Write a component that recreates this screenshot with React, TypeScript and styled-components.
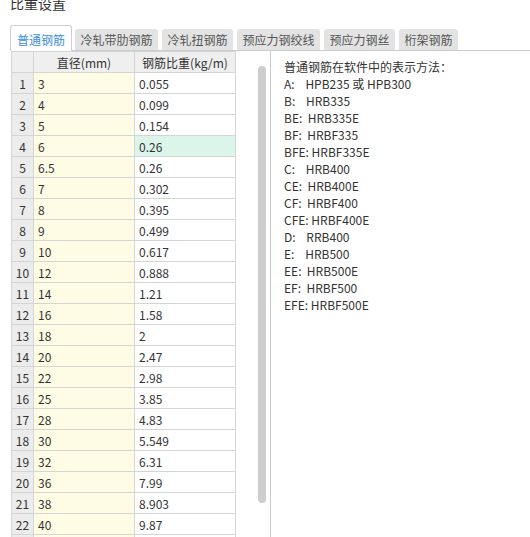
import { useState } from "react";
import styled, { createGlobalStyle } from "styled-components";

const GlobalStyle = createGlobalStyle`
  html, body {
    margin: 0;
    padding: 0;
    height: 537px;
    overflow: hidden;
    background: #fff;
    color: #333;
    font-family: "Microsoft YaHei", "Noto Sans CJK SC", sans-serif;
  }
`;

const TABS = ["普通钢筋", "冷轧带肋钢筋", "冷轧扭钢筋", "预应力钢绞线", "预应力钢丝", "桁架钢筋"];

const ROWS: [string, string][] = [
  ["3", "0.055"],
  ["4", "0.099"],
  ["5", "0.154"],
  ["6", "0.26"],
  ["6.5", "0.26"],
  ["7", "0.302"],
  ["8", "0.395"],
  ["9", "0.499"],
  ["10", "0.617"],
  ["12", "0.888"],
  ["14", "1.21"],
  ["16", "1.58"],
  ["18", "2"],
  ["20", "2.47"],
  ["22", "2.98"],
  ["25", "3.85"],
  ["28", "4.83"],
  ["30", "5.549"],
  ["32", "6.31"],
  ["36", "7.99"],
  ["38", "8.903"],
  ["40", "9.87"],
  ["50", "15.42"],
];

const NOTES = [
  "普通钢筋在软件中的表示方法：",
  "A:    HPB235 或 HPB300",
  "B:    HRB335",
  "BE:  HRB335E",
  "BF:  HRBF335",
  "BFE: HRBF335E",
  "C:    HRB400",
  "CE:  HRB400E",
  "CF:  HRBF400",
  "CFE: HRBF400E",
  "D:    RRB400",
  "E:    HRB500",
  "EE:  HRB500E",
  "EF:  HRBF500",
  "EFE: HRBF500E",
];

export default function App() {
  const [active, setActive] = useState(0);
  const selectedRow = 3;

  return (
    <>
      <GlobalStyle />
      <Title>比重设置</Title>
      <TabBar>
        {TABS.map((t, i) => (
          <Tab key={t} $active={i === active} onClick={() => setActive(i)}>
            {t}
          </Tab>
        ))}
      </TabBar>
      <Panel>
        <LeftPane>
          <Grid>
            <thead>
              <tr>
                <HeadCell $narrow />
                <HeadCell>直径(mm)</HeadCell>
                <HeadCell>钢筋比重(kg/m)</HeadCell>
              </tr>
            </thead>
            <tbody>
              {ROWS.map(([d, w], i) => (
                <tr key={i}>
                  <IndexCell>{i + 1}</IndexCell>
                  <DiaCell>{d}</DiaCell>
                  <WeightCell $selected={i === selectedRow}>{w}</WeightCell>
                </tr>
              ))}
            </tbody>
          </Grid>
          <ScrollTrack>
            <ScrollThumb />
          </ScrollTrack>
        </LeftPane>
        <RightPane>
          {NOTES.map((n) => (
            <NoteLine key={n}>{n}</NoteLine>
          ))}
        </RightPane>
      </Panel>
    </>
  );
}

const Title = styled.div`
  margin-top: -4px;
  padding-left: 10px;
  font-size: 14px;
  line-height: 14px;
  height: 14px;
  color: #333;
`;

const TabBar = styled.div`
  display: flex;
  align-items: flex-end;
  gap: 4px;
  margin: 15px 0 0 10px;
  height: 25px;
  position: relative;
  z-index: 1;
`;

const Tab = styled.div<{ $active: boolean }>`
  font-size: 12px;
  line-height: 21px;
  padding: ${(p) => (p.$active ? "3px 6px 1px" : "0 5.5px")};
  border-radius: 3px 3px 0 0;
  cursor: pointer;
  white-space: nowrap;
  color: ${(p) => (p.$active ? "#3d8ee0" : "#555")};
  background: ${(p) => (p.$active ? "#fff" : "#e3e3e3")};
  border: ${(p) => (p.$active ? "1px solid #cfcfd4" : "none")};
  border-bottom: none;
  margin-bottom: ${(p) => (p.$active ? "-1px" : "0")};
  margin-right: ${(p) => (p.$active ? "-1px" : "0")};
`;

const Panel = styled.div`
  display: flex;
  margin-left: 10px;
  border-top: 1px solid #c9c9d0;
  height: 486px;
`;

const LeftPane = styled.div`
  display: flex;
  width: 260px;
  flex-shrink: 0;
  overflow: hidden;
`;

const Grid = styled.table`
  border-collapse: collapse;
  table-layout: fixed;
  width: 225px;
  margin-left: 1px;
  align-self: flex-start;
  flex-shrink: 0;
  font-size: 12px;
  color: #333;

  td,
  th {
    border: 1px solid #d5d5d5;
    height: 21px;
    padding: 0 4px;
    box-sizing: border-box;
    white-space: nowrap;
  }
`;

const HeadCell = styled.th<{ $narrow?: boolean }>`
  width: ${(p) => (p.$narrow ? "22px" : "101px")};
  background: #efefef;
  font-weight: normal;
  text-align: center;
`;

const IndexCell = styled.td`
  background: #ececec;
  text-align: center;
  padding: 0 !important;
`;

const DiaCell = styled.td`
  background: #fffce6;
`;

const WeightCell = styled.td<{ $selected: boolean }>`
  background: ${(p) => (p.$selected ? "#dcf5ea" : "#fff")};
`;

const ScrollTrack = styled.div`
  flex: 1;
  display: flex;
  justify-content: flex-end;
  align-items: flex-start;
  padding: 15px 4px 0 0;
`;

const ScrollThumb = styled.div`
  width: 8px;
  height: 437px;
  flex-shrink: 0;
  border-radius: 4px;
  background: #cdcdcd;
`;

const RightPane = styled.div`
  flex: 1;
  border-left: 1px solid #c9c9c9;
  padding: 7px 13px;
`;

const NoteLine = styled.div`
  font-size: 12px;
  line-height: 17px;
  white-space: pre;
  color: #333;
`;
